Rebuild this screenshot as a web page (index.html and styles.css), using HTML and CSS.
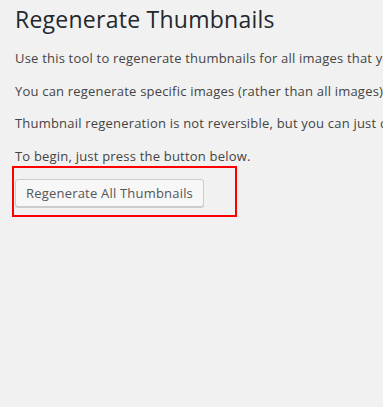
FILE: index.html
```html
<!DOCTYPE html>
<html lang="en">

<head>
    <meta charset="UTF-8" />
    <meta name="viewport" content="width=device-width, initial-scale=1.0" />
    <title>Regenerate Thumbnails</title>
    <link rel="stylesheet" href="styles.css">
</head>

<body>
    <div class="wrap">
        <h1>Regenerate Thumbnails</h1>
        <p>Use this tool to regenerate thumbnails for all images that you have uploaded to your site.</p>
        <p>You can regenerate specific images (rather than all images) from the Media page.</p>
        <p>Thumbnail regeneration is not reversible, but you can just change your thumbnail dimensions back.</p>
        <p>To begin, just press the button below.</p>
        <div class="highlight">
            <button type="button" class="button">Regenerate All Thumbnails</button>
        </div>
    </div>
</body>

</html>
```

FILE: styles.css
```css
body {
    margin: 0;
    background-color: #f1f1f1;
    color: #444;
    font-family: "Open Sans", "Noto Sans", sans-serif;
    font-size: 13px;
    line-height: 1.5;
    letter-spacing: 0.2px;
    overflow: hidden;
}

.wrap {
    padding: 4px 0 0 15px;
    white-space: nowrap;
}

h1 {
    margin: 0 0 15px;
    font-size: 23px;
    font-weight: 400;
    line-height: 30px;
    letter-spacing: 0.25px;
    color: #23282d;
}

p {
    margin: 0 0 13px;
}

.highlight {
    width: max-content;
    margin: -13px 0 0 -3px;
    padding: 11px 31px 8px 1px;
    border: 2px solid #ff0000;
}

.button {
    display: block;
    height: 28px;
    margin: 0;
    padding: 0 10px 1px;
    font-family: inherit;
    font-size: 13px;
    line-height: 26px;
    letter-spacing: 0.2px;
    color: #555;
    background-color: #f7f7f7;
    border: 1px solid #ccc;
    border-radius: 3px;
    box-shadow: 0 1px 0 #ccc;
    cursor: pointer;
}
```
